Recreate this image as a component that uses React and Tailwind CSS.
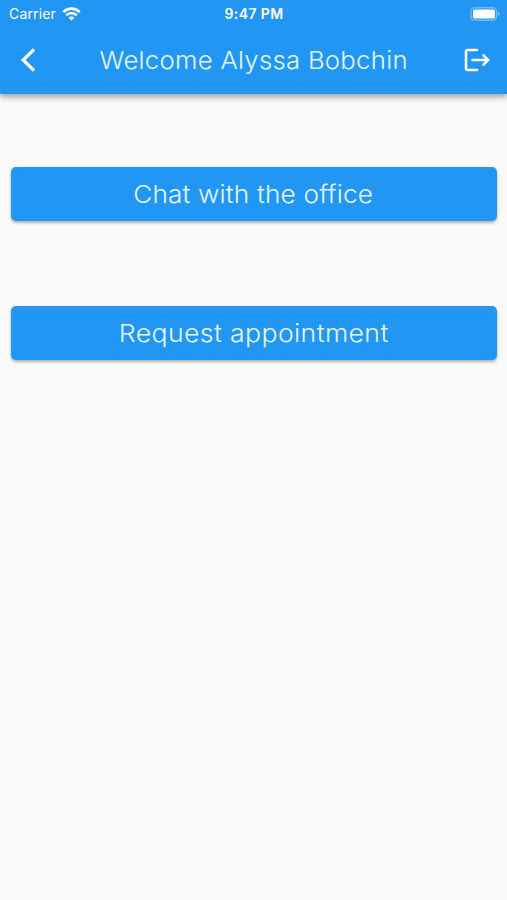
const WifiIcon = () => (
  <svg className="ml-[6px] h-[14px] w-[19px]" viewBox="0 0 19 14" fill="none">
    <path d="M1.3 5.1A11.6 11.6 0 0 1 17.7 5.1" stroke="white" strokeWidth="2.7" />
    <path d="M4.3 8.3A7.4 7.4 0 0 1 14.7 8.3" stroke="white" strokeWidth="2.4" />
    <path d="M6.6 10.8A4.2 4.2 0 0 1 12.4 10.8L9.5 13.6Z" fill="white" />
  </svg>
);

const BatteryIcon = () => (
  <svg className="h-[14px] w-[31px]" viewBox="0 0 31 14" fill="none">
    <rect x="1" y="0.8" width="25.6" height="12.4" rx="3.6" stroke="#72bbf8" strokeWidth="1.4" />
    <rect x="3" y="2.5" width="22" height="9" rx="1.6" fill="white" />
    <path d="M27.8 4.8C30.4 5.6 30.4 8.4 27.8 9.2Z" fill="#72bbf8" />
  </svg>
);

const BackIcon = () => (
  <svg className="h-[24px] w-[16px]" viewBox="0 0 16 24" fill="none">
    <path d="M14 1.3L3.2 12L14 22.7" stroke="white" strokeWidth="3.2" />
  </svg>
);

const LogoutIcon = () => (
  <svg className="h-[24px] w-[26px]" viewBox="0 0 26 24" fill="none" stroke="white" strokeWidth="2.5">
    <path d="M13 1.9H3.6Q2 1.9 2 3.5V20.3Q2 21.9 3.6 21.9H13" strokeLinecap="round" />
    <path d="M8.4 12H24" strokeLinecap="round" />
    <path d="M18.8 6.6L24.2 12L18.8 17.4" />
  </svg>
);

const StatusBar = () => (
  <div className="grid h-[27px] grid-cols-3 items-center pr-[6px] pl-[9px] text-white">
    <div className="flex items-center">
      <span className="text-[14px] leading-none tracking-[0.15px]">Carrier</span>
      <WifiIcon />
    </div>
    <span className="pt-px pr-[2px] text-center text-[14px] leading-none font-semibold tracking-[0.4px]">9:47 PM</span>
    <div className="flex justify-end">
      <BatteryIcon />
    </div>
  </div>
);

const ActionButton = ({ className, children }) => (
  <button className="flex h-[54px] w-full items-center justify-center rounded-[5px] bg-[#2196f3] text-[24.5px] font-light text-[#e6f8ff] shadow-[0_2px_3px_rgba(0,0,0,0.3)]">
    <span className={className}>{children}</span>
  </button>
);

const App = () => {
  return (
    <div className="flex h-screen flex-col bg-[#fafafa] font-['Inter',sans-serif]">
      <header className="h-[94px] bg-[#2196f3] shadow-[0_3px_6px_rgba(0,0,0,0.36)]">
        <StatusBar />
        <div className="grid h-[66px] grid-cols-[40px_1fr_40px] items-center pr-[17px] pl-[20px]">
          <button aria-label="Back">
            <BackIcon />
          </button>
          <h1 className="scale-x-105 justify-self-center pr-[2px] text-[24.5px] font-light tracking-[0.25px] whitespace-nowrap text-[#e6f8ff]">
            Welcome Alyssa Bobchin
          </h1>
          <button aria-label="Log out" className="justify-self-end">
            <LogoutIcon />
          </button>
        </div>
      </header>
      <main className="flex flex-col gap-[85px] px-[10.5px] pt-[73px]">
        <ActionButton className="scale-x-[1.07] tracking-[0.15px]">Chat with the office</ActionButton>
        <ActionButton className="scale-x-[1.09] tracking-[0.3px]">Request appointment</ActionButton>
      </main>
    </div>
  );
};

export default App;
